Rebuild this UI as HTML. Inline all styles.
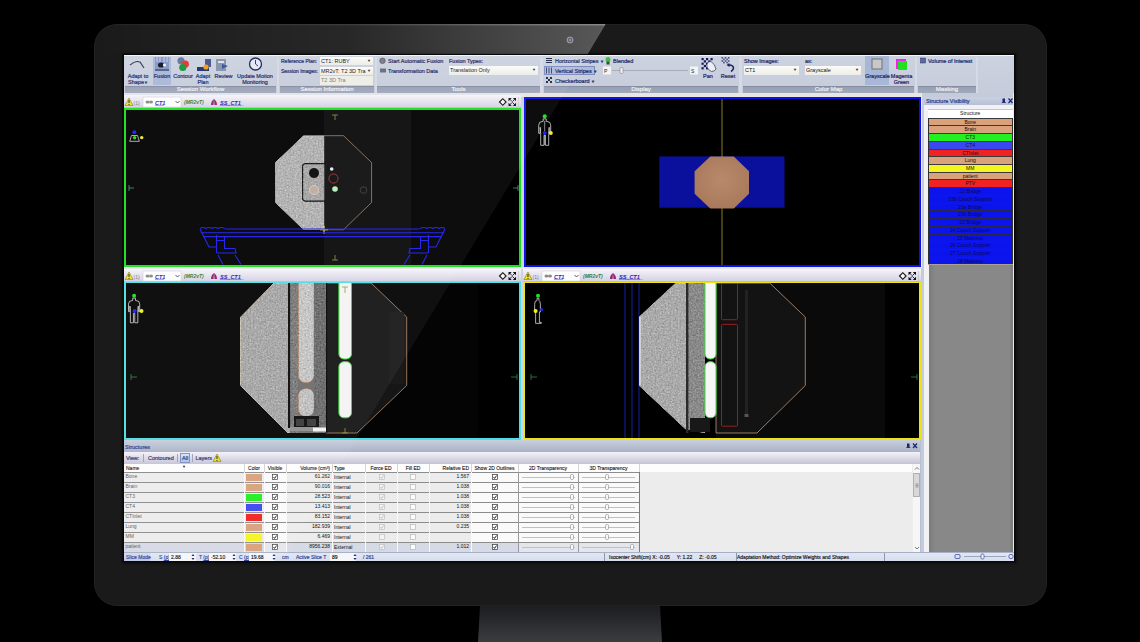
<!DOCTYPE html>
<html><head><meta charset="utf-8">
<style>
html,body{margin:0;padding:0;}
body{width:1140px;height:642px;background:#000;position:relative;overflow:hidden;font-family:"Liberation Sans",sans-serif;}
.a{position:absolute;}
#bezel{left:94px;top:24px;width:952.5px;height:582px;border-radius:23px;background:#1a1a1a;box-shadow:inset 0 0 0 0.8px rgba(255,255,255,0.05);}
#stand{left:478px;top:606px;width:184px;height:36px;background:linear-gradient(#1c1d1f,#25262a 30%,#3c3d41);clip-path:polygon(2px 0,182px 0,184px 100%,0 100%);}
#screen{left:124px;top:55px;width:890px;height:506px;background:#cdd3df;box-shadow:0 0 0 1.5px #080808, 0 0 2px 2.5px #121212;}
.rib{background:linear-gradient(#cdd2e0,#c6ccdb);}
.lbl{background:linear-gradient(#7c8498,#98a0b4 20%,#a0a8bb);color:#f4f6fa;font-size:6px;text-align:center;line-height:7.5px;-webkit-text-stroke:0.15px #f4f6fa;}
.t{font-size:5.5px;line-height:6px;color:#1a2566;white-space:nowrap;-webkit-text-stroke:0.2px currentColor;}
.cb{background:linear-gradient(#fbfbf9,#ecece8);font-size:5.5px;line-height:8px;color:#111;padding-left:1px;box-sizing:border-box;white-space:nowrap;overflow:hidden;}
.dd{position:absolute;right:2px;top:0;font-size:4px;color:#222;}
.sr{font-size:5px;line-height:7px;text-align:center;box-sizing:border-box;white-space:nowrap;overflow:hidden;}
.th{font-size:5px;line-height:8px;color:#111;white-space:nowrap;box-sizing:border-box;-webkit-text-stroke:0.1px #111;}
.td{font-size:5px;line-height:7px;white-space:nowrap;}
.st{font-size:5px;line-height:8px;white-space:nowrap;-webkit-text-stroke:0.15px currentColor;}
.vp{background:#000;}
.hdr{background:linear-gradient(#f6f4fa,#d6d2e4);}
</style></head><body>
<svg width="0" height="0" style="position:absolute"><defs>
<filter id="grain" x="0" y="0" width="100%" height="100%" color-interpolation-filters="sRGB">
<feTurbulence type="fractalNoise" baseFrequency="0.6" numOctaves="2" seed="3" result="n"/>
<feColorMatrix in="n" type="matrix" values="0.33 0.33 0.33 0 0  0.33 0.33 0.33 0 0  0.33 0.33 0.33 0 0  0 0 0 0 1" result="g"/>
<feComposite in="SourceGraphic" in2="g" operator="arithmetic" k1="0" k2="1" k3="0.55" k4="-0.275" result="c"/>
<feComposite in="c" in2="SourceGraphic" operator="in"/>
</filter>
</defs></svg>
<div id="bezel" class="a"></div>
<div id="stand" class="a"></div>
<svg class="a" style="left:560px;top:30px" width="20" height="20"><circle cx="10" cy="10" r="3" fill="#3a3a44" stroke="#9a9aa0" stroke-width="0.8"/><circle cx="10" cy="10" r="1" fill="#6a6ad0"/></svg>

<div id="screen" class="a"></div>

<!-- ribbon -->
<div class="a rib" style="left:124px;top:55px;width:890px;height:38px;border-top:1px solid #f4f6fa;box-sizing:border-box;"></div>
<!-- ribbon content -->
<div class="a" style="left:153px;top:57px;width:18px;height:28px;background:#a9b7d7;"></div>
<div class="a" style="left:865px;top:56px;width:24px;height:29px;background:#a9b7d7;"></div>
<div class="a" style="left:375px;top:57px;width:2px;height:36px;background:#d6dae4;"></div>
<div class="a" style="left:277px;top:57px;width:2px;height:36px;background:#d6dae4;"></div>
<div class="a" style="left:540px;top:57px;width:3px;height:36px;background:#d6dae4;"></div>
<div class="a" style="left:739px;top:57px;width:3px;height:36px;background:#d6dae4;"></div>
<div class="a" style="left:915px;top:57px;width:2px;height:36px;background:#d6dae4;"></div>
<div class="a" style="left:976px;top:57px;width:2px;height:36px;background:#d6dae4;"></div>
<svg class="a" style="left:124px;top:55px;z-index:1" width="890" height="32">
 <!-- adapt to shape curve -->
 <path d="M6 10 Q12 5 16 7 L20 13" stroke="#3a4058" stroke-width="1.2" fill="none"/>
 <path d="M6 9 Q12 4 16 6" stroke="#f0f2f8" stroke-width="0.6" fill="none"/>
 <!-- fusion icon -->
 <rect x="31" y="2" width="14" height="14" fill="#8c9cc8"/>
 <path d="M33 2v5M36 2v5M40 2v5M43 2v5" stroke="#c8d4ee" stroke-width="1"/>
 <ellipse cx="37" cy="10" rx="3" ry="2.6" fill="#182030"/>
 <ellipse cx="40.5" cy="10" rx="1.6" ry="1.6" fill="#f0f4fa"/>
 <rect x="31" y="14" width="14" height="2" fill="#5a6890"/>
 <!-- contour -->
 <circle cx="57" cy="5.8" r="3.6" fill="#6a7aa0"/>
 <circle cx="61.3" cy="9.2" r="3.6" fill="#e83a3a"/>
 <circle cx="58.8" cy="12.5" r="3.6" fill="#1e9a40"/>
 <!-- adapt plan -->
 <rect x="73" y="12" width="12" height="4" fill="#2a3a70"/>
 <rect x="81" y="4" width="6" height="8" fill="#4a5a90"/>
 <circle cx="82" cy="12" r="2.6" fill="#f0a020"/>
 <!-- review -->
 <rect x="92" y="4" width="10" height="12" fill="#8c96ae"/>
 <rect x="94" y="6" width="6" height="2" fill="#dfe3ee"/>
 <path d="M98 9 L104 11 L98 14 Z" fill="#3a5aa0"/>
 <!-- clock -->
 <circle cx="131.5" cy="9" r="6" fill="#e6e9f2" stroke="#22305e" stroke-width="1.3"/>
 <path d="M131.5 5 V9 L134 11" stroke="#22305e" stroke-width="0.9" fill="none"/>
 <!-- start automatic fusion icon -->
 <circle cx="258.5" cy="5.8" r="2.8" fill="#7a8090" stroke="#505868" stroke-width="0.6"/>
 <rect x="256" y="13.5" width="6" height="4" fill="#6c7284"/>
 <!-- display icons -->
 <path d="M422 3.5h6M422 5.5h6M422 7.5h6" stroke="#2a3050" stroke-width="1"/>
 <path d="M422.5 12.5v6M425 12.5v6M427.5 12.5v6" stroke="#2a3050" stroke-width="0.8"/>
 <g fill="#2a3050"><rect x="422" y="22" width="2" height="2"/><rect x="426" y="22" width="2" height="2"/><rect x="424" y="24" width="2" height="2"/><rect x="422" y="26" width="2" height="2"/><rect x="426" y="26" width="2" height="2"/></g>
 <circle cx="484" cy="4.5" r="2.5" fill="#40c040"/>
 <rect x="482.5" y="6.5" width="3" height="3" fill="#305030"/>
 <!-- slider -->
 <rect x="479" y="11.5" width="8" height="8" fill="#f4f4f4"/>
 <text x="480" y="18" font-size="5" fill="#222" font-family="Liberation Sans">P</text>
 <path d="M488 15.5 H564" stroke="#a0a4ae" stroke-width="0.8"/>
 <rect x="496" y="12.5" width="3" height="6" rx="1" fill="#f0f0f0" stroke="#707480" stroke-width="0.5"/>
 <rect x="566" y="11.5" width="8" height="8" fill="#f4f4f4"/>
 <text x="567" y="18" font-size="5" fill="#222" font-family="Liberation Sans">S</text>
 <!-- pan -->
 <g fill="#141c58">
  <rect x="577.5" y="3" width="2.2" height="2.2"/><rect x="582" y="3" width="2.2" height="2.2"/><rect x="586.5" y="3" width="2.2" height="2.2"/>
  <rect x="579.8" y="5.3" width="2.2" height="2.2"/><rect x="584.3" y="5.3" width="2.2" height="2.2"/>
  <rect x="577.5" y="7.6" width="2.2" height="2.2"/><rect x="582" y="7.6" width="2.2" height="2.2"/>
  <rect x="579.8" y="9.9" width="2.2" height="2.2"/><rect x="577.5" y="12.2" width="2.2" height="2.2"/><rect x="582" y="12.2" width="2.2" height="2.2"/>
 </g>
 <path d="M583 9 Q584 6 587 6.5 Q591 9 592 14 Q591 16.5 587.5 16.5 Q584 15 583 12 Z" fill="#eceef4" stroke="#3a4260" stroke-width="0.8"/>
 <!-- reset -->
 <g fill="#4a5488"><rect x="597.5" y="2" width="1.6" height="1.6"/><rect x="600.7" y="2" width="1.6" height="1.6"/><rect x="603.9" y="2" width="1.6" height="1.6"/><rect x="599.1" y="3.6" width="1.6" height="1.6"/><rect x="602.3" y="3.6" width="1.6" height="1.6"/><rect x="597.5" y="5.2" width="1.6" height="1.6"/><rect x="600.7" y="5.2" width="1.6" height="1.6"/><rect x="603.9" y="5.2" width="1.6" height="1.6"/><rect x="599.1" y="6.8" width="1.6" height="1.6"/><rect x="602.3" y="6.8" width="1.6" height="1.6"/></g>
 <path d="M604 10 Q609 9.5 609.5 13 Q609.5 15 607 16.5" stroke="#1a2460" stroke-width="1.6" fill="none"/>
 <path d="M602.5 10 L605.5 8 L605.5 12 Z" fill="#1a2460"/>
 <!-- grayscale icon -->
 <rect x="748" y="4" width="10" height="10" fill="#c8c8c8" stroke="#707070" stroke-width="1"/>
 <!-- magenta green -->
 <rect x="772" y="4" width="10" height="10" fill="#f020f0"/>
 <rect x="774" y="6" width="9" height="9" fill="#20e020"/>
 <!-- VOI icon -->
 <rect x="796.5" y="3" width="5" height="5" fill="#5868a0" stroke="#2a3460" stroke-width="0.5"/>
</svg>
<div class="a t" style="left:126px;top:73px;width:24px;text-align:center;">Adapt to<br>Shape<span style="font-size:4px">&#9660;</span></div>
<div class="a t" style="left:152px;top:73px;width:20px;text-align:center;">Fusion</div>
<div class="a t" style="left:172px;top:73px;width:22px;text-align:center;">Contour</div>
<div class="a t" style="left:193px;top:73px;width:20px;text-align:center;">Adapt<br>Plan</div>
<div class="a t" style="left:214px;top:73px;width:19px;text-align:center;">Review</div>
<div class="a t" style="left:234px;top:73px;width:42px;text-align:center;">Update Motion<br>Monitoring</div>
<div class="a t" style="left:281px;top:58px;font-size:5px;">Reference Plan:</div>
<div class="a t" style="left:281px;top:68px;font-size:5px;">Session Images:</div>
<div class="a cb" style="left:320px;top:57px;width:53px;height:8px;">CT1: RUBY<span class="dd">&#9660;</span></div>
<div class="a cb" style="left:320px;top:67px;width:53px;height:8px;">MR2vT: T2 3D Tra<span class="dd">&#9660;</span></div>
<div class="a cb" style="left:320px;top:76px;width:53px;height:9px;background:#eeeee8;color:#777;">T2 3D Tra</div>
<div class="a t" style="left:388px;top:58px;">Start Automatic Fusion</div>
<div class="a t" style="left:388px;top:68px;">Transformation Data</div>
<div class="a t" style="left:449px;top:58px;">Fusion Types:</div>
<div class="a cb" style="left:449px;top:66px;width:89px;height:9px;">Translation Only<span class="dd">&#9660;</span></div>
<div class="a" style="left:544px;top:66px;width:51px;height:9px;background:#aebcdc;border:0.6px solid #7c8cc0;box-sizing:border-box;"></div>
<div class="a t" style="left:555px;top:58px;">Horizontal Stripes <span style="font-size:4px">&#9660;</span></div>
<div class="a t" style="left:555px;top:68px;">Vertical Stripes <span style="font-size:4px">&#9660;</span></div>
<div class="a t" style="left:555px;top:78px;">Checkerboard <span style="font-size:4px">&#9660;</span></div>
<div class="a t" style="left:613px;top:58px;">Blended</div>
<div class="a t" style="left:700px;top:73px;width:16px;text-align:center;">Pan</div>
<div class="a t" style="left:719px;top:73px;width:18px;text-align:center;">Reset</div>
<div class="a t" style="left:744px;top:58px;">Show Images:</div>
<div class="a cb" style="left:744px;top:66px;width:55px;height:9px;">CT1<span class="dd">&#9660;</span></div>
<div class="a t" style="left:805px;top:58px;">as:</div>
<div class="a cb" style="left:805px;top:66px;width:56px;height:9px;">Grayscale<span class="dd">&#9660;</span></div>
<div class="a t" style="left:865px;top:73px;width:24px;text-align:center;">Grayscale</div>
<div class="a t" style="left:889px;top:73px;width:25px;text-align:center;">Magenta<br>Green</div>
<div class="a t" style="left:928px;top:58px;">Volume of Interest</div>
<div class="a lbl" style="left:125px;top:86px;width:151px;height:7px;">Session Workflow</div>
<div class="a lbl" style="left:280px;top:86px;width:94px;height:7px;">Session Information</div>
<div class="a lbl" style="left:377px;top:86px;width:163px;height:7px;">Tools</div>
<div class="a lbl" style="left:544px;top:86px;width:194px;height:7px;">Display</div>
<div class="a lbl" style="left:743px;top:86px;width:171px;height:7px;">Color Map</div>
<div class="a lbl" style="left:918px;top:86px;width:58px;height:7px;">Masking</div>

<!-- TL viewport -->
<div class="a" style="left:124px;top:93px;width:397px;height:2px;background:#e2e4ea;"></div>
<div class="a hdr" style="left:124px;top:95px;width:397px;height:12px;"></div>
<div class="a" style="left:124px;top:107px;width:397px;height:1px;background:#d8a8e8;"></div>
<svg class="a" style="left:124px;top:95px" width="397" height="13">
 <path d="M5 3 L9 10.5 L1 10.5 Z" fill="#f0e020" stroke="#807820" stroke-width="0.6"/>
 <rect x="4.5" y="5" width="1" height="3" fill="#222"/><rect x="4.5" y="9" width="1" height="1" fill="#222"/>
 <text x="9.5" y="9.5" font-size="5" fill="#707a98" font-family="Liberation Sans">(1)</text>
 <rect x="19" y="2" width="38" height="10" fill="#fdfdfd" stroke="#c8ccd8" stroke-width="0.5"/>
 <ellipse cx="23.5" cy="7" rx="2" ry="1.5" fill="#8a8a8a"/><ellipse cx="27" cy="7" rx="2" ry="1.5" fill="#8a8a8a"/>
 <text x="31" y="9.5" font-size="5.5" font-weight="bold" font-style="italic" fill="#2020c0" font-family="Liberation Sans">CT1</text>
 <path d="M31 10.3 H40" stroke="#2020c0" stroke-width="0.5"/>
 <path d="M51.5 6 L53.5 8 L55.5 6" stroke="#333" stroke-width="0.8" fill="none"/>
 <text x="60" y="9.3" font-size="5" font-style="italic" font-weight="bold" fill="#2a7e36" font-family="Liberation Sans">(MR2vT)</text>
 <path d="M90 4 Q87 6 87 10 L89.5 10 Z M90 4 Q93 6 93 10 L90.5 10 Z" fill="#902070"/>
 <text x="96" y="9.5" font-size="5.5" font-weight="bold" font-style="italic" fill="#2020c0" font-family="Liberation Sans">SS_CT1_</text>
 <path d="M96 10.3 H117" stroke="#2020c0" stroke-width="0.5"/>
</svg>
<svg class="a" style="left:495px;top:95px" width="26" height="13">
 <path d="M4.5 7 L7.8 3.7 L11.1 7 L7.8 10.3 Z" fill="#f8f8f0" stroke="#111" stroke-width="1.1"/>
 <path d="M13.5 3 h3.2 l-3.2 3.2 z M21 3 v3.2 l-3.2 -3.2 z M13.5 11 v-3.2 l3.2 3.2 z M21 11 h-3.2 l3.2 -3.2 z" fill="#111"/><path d="M14.5 4 l2.5 2.5 M20 4 l-2.5 2.5 M14.5 10 l2.5 -2.5 M20 10 l-2.5 -2.5" stroke="#111" stroke-width="0.9"/>
 <path d="M23.5 2 V12" stroke="#c0c0cc" stroke-width="0.6"/>
</svg>

<div class="a vp" style="left:124px;top:108px;width:393px;height:155px;border:2px solid #18e018;"></div>
<svg class="a" style="left:126px;top:110px" width="393" height="155" viewBox="126 110 393 155">
<rect x="126" y="110" width="393" height="155" fill="#000"/>
<rect x="324" y="110" width="87" height="155" fill="#0a0a0a"/>
<polygon filter="url(#grain)" points="303.5,135.7 324.3,135.7 324.3,229.7 303.5,229.7 275.4,202.5 275.4,162.5" fill="#b0b0b0" stroke="#e8e0d8" stroke-width="0.8"/>
<polygon points="324.3,135.7 343.5,135.7 371.6,162.5 371.6,202.5 343.5,229.7 324.3,229.7" fill="#0f0f0f"/><path d="M324.3 135.7 H343.5 L371.6 162.5 V202.5 L343.5 229.7 H324.3" fill="none" stroke="#b89078" stroke-width="0.7"/>
<rect filter="url(#grain)" x="302.5" y="163.7" width="24" height="37.5" rx="3" fill="#a4a4a4" stroke="#111" stroke-width="1.3"/>
<rect x="324.3" y="162" width="4" height="41" fill="#0f0f0f"/>
<circle cx="314" cy="173" r="5.5" fill="#080808" stroke="#ccc0b8" stroke-width="0.8"/>
<circle cx="314" cy="190" r="4.5" fill="#c0aaa0" stroke="#e0d0c8" stroke-width="0.8"/>
<circle cx="331.7" cy="169" r="1.8" fill="#e8e8ff"/>
<circle cx="333.5" cy="178.5" r="4.6" fill="none" stroke="#c02828" stroke-width="0.9"/>
<circle cx="335" cy="189" r="2.8" fill="#b8f0b8"/>
<circle cx="363.5" cy="190" r="3.2" fill="none" stroke="#303030" stroke-width="1.2"/>
<path d="M320 229.7 h8 M324 225.7 v8" stroke="#f0e040" stroke-width="1.1"/>
<g stroke="#1c1cf0" stroke-width="1.1" fill="none"><path d="M225.5 229 H419.5 M200.7 232.8 H444.3 M203 236.6 H442 M200 228.5 q3 -2 6 0 q3 -2 6 0 q3 -2 6 0 q3 -2 7 0 M200 229 L209 247 H216.5 M216.5 235 V253 M216.5 240.5 H224.5 M224.5 236 V248.5 H235 L236 253 H217 M218 255 L223 264.5 M235 255 L241 264.5"/><path d="M445 228.5 q-3 -2 -6 0 q-3 -2 -6 0 q-3 -2 -6 0 q-3 -2 -7 0 M445 229 L436 247 H428.5 M428.5 235 V253 M428.5 240.5 H420.5 M420.5 236 V248.5 H410 L409 253 H428 M427 255 L422 264.5 M410 255 L404 264.5"/></g>
<path d="M332 115 h6 M335 115 v5" stroke="#9a9040" stroke-width="0.8"/>
<path d="M332 260 h6 M335 260 v-5" stroke="#9a9040" stroke-width="0.8"/>
<path d="M129 185 v6 M129 188 h5" stroke="#4a9a80" stroke-width="0.8"/>
<path d="M518 185 v6 M518 188 h-5" stroke="#4a9a80" stroke-width="0.8"/>
<circle cx="134.3" cy="132.2" r="1.9" fill="#2020f0"/>
<path d="M131.5 135.5 h6 l1.8 5.8 h-9.6 z" fill="none" stroke="#d0d0d8" stroke-width="0.8"/>
<circle cx="134.6" cy="137.8" r="1.7" fill="#20e020"/>
<circle cx="141.7" cy="137.6" r="1.7" fill="#f0f020"/>
</svg>

<!-- TR viewport -->
<div class="a" style="left:521px;top:93px;width:402px;height:4px;background:#e8e6e0;"></div>
<div class="a" style="left:523.5px;top:97px;width:393.5px;height:166px;border:2px solid #0a10f0;background:#000;"></div>
<svg class="a" style="left:526px;top:99px" width="391" height="166" viewBox="526 99 391 166">
<rect x="526" y="99" width="391" height="166" fill="#000"/>
<rect x="659.3" y="156.4" width="125.2" height="51.3" fill="#0a109c"/>
<line x1="722" y1="99" x2="722" y2="265" stroke="#8c7c22" stroke-width="1"/>
<defs><radialGradient id="tan" cx="0.5" cy="0.45" r="0.6"><stop offset="0" stop-color="#b88a6a"/><stop offset="1" stop-color="#a8785a"/></radialGradient></defs>
<polygon points="710.3,156.4 733.8,156.4 749,171.3 749,193.7 733.8,208.5 710.3,208.5 694.6,193.7 694.6,171.3" fill="url(#tan)"/>
<polygon points="543.20,118.80 543.20,121.30 539.70,122.30 538.70,125.30 538.70,133.30 540.20,133.30 540.20,127.30 540.70,133.30 540.70,145.30 544.00,145.30 544.00,135.30 545.40,135.30 545.40,145.30 548.70,145.30 548.70,133.30 549.20,127.30 549.20,133.30 550.70,133.30 550.70,125.30 549.70,122.30 546.20,121.30 546.20,118.80" fill="none" stroke="#d8d8d8" stroke-width="0.8"/>
<circle cx="544.7" cy="116.3" r="2" fill="#20e020"/>
<line x1="544.7" y1="121" x2="544.7" y2="145" stroke="#c8c8c8" stroke-width="0.7"/>
<circle cx="544.7" cy="133" r="2" fill="#2020f0"/>
<circle cx="550.8" cy="133" r="2" fill="#f0f020"/>
</svg>

<!-- BL -->
<div class="a" style="left:124px;top:267px;width:797px;height:2px;background:#e6e4ec;"></div>
<div class="a hdr" style="left:124px;top:269px;width:397px;height:12px;"></div>
<div class="a" style="left:124px;top:281px;width:397px;height:1px;background:#d8a8e8;"></div>
<svg class="a" style="left:124px;top:269px" width="397" height="13">
 <path d="M5 3 L9 10.5 L1 10.5 Z" fill="#f0e020" stroke="#807820" stroke-width="0.6"/>
 <rect x="4.5" y="5" width="1" height="3" fill="#222"/><rect x="4.5" y="9" width="1" height="1" fill="#222"/>
 <text x="9.5" y="9.5" font-size="5" fill="#707a98" font-family="Liberation Sans">(1)</text>
 <rect x="19" y="2" width="38" height="10" fill="#fdfdfd" stroke="#c8ccd8" stroke-width="0.5"/>
 <ellipse cx="23.5" cy="7" rx="2" ry="1.5" fill="#8a8a8a"/><ellipse cx="27" cy="7" rx="2" ry="1.5" fill="#8a8a8a"/>
 <text x="31" y="9.5" font-size="5.5" font-weight="bold" font-style="italic" fill="#2020c0" font-family="Liberation Sans">CT1</text>
 <path d="M31 10.3 H40" stroke="#2020c0" stroke-width="0.5"/>
 <path d="M51.5 6 L53.5 8 L55.5 6" stroke="#333" stroke-width="0.8" fill="none"/>
 <text x="60" y="9.3" font-size="5" font-style="italic" font-weight="bold" fill="#2a7e36" font-family="Liberation Sans">(MR2vT)</text>
 <path d="M90 4 Q87 6 87 10 L89.5 10 Z M90 4 Q93 6 93 10 L90.5 10 Z" fill="#902070"/>
 <text x="96" y="9.5" font-size="5.5" font-weight="bold" font-style="italic" fill="#2020c0" font-family="Liberation Sans">SS_CT1_</text>
 <path d="M96 10.3 H117" stroke="#2020c0" stroke-width="0.5"/>
</svg>
<svg class="a" style="left:495px;top:269px" width="26" height="13">
 <path d="M4.5 7 L7.8 3.7 L11.1 7 L7.8 10.3 Z" fill="#f8f8f0" stroke="#111" stroke-width="1.1"/>
 <path d="M13.5 3 h3.2 l-3.2 3.2 z M21 3 v3.2 l-3.2 -3.2 z M13.5 11 v-3.2 l3.2 3.2 z M21 11 h-3.2 l3.2 -3.2 z" fill="#111"/><path d="M14.5 4 l2.5 2.5 M20 4 l-2.5 2.5 M14.5 10 l2.5 -2.5 M20 10 l-2.5 -2.5" stroke="#111" stroke-width="0.9"/>
 <path d="M23.5 2 V12" stroke="#c0c0cc" stroke-width="0.6"/>
</svg>

<div class="a vp" style="left:124px;top:281.5px;width:393px;height:154.5px;border:2px solid #4cdfe4;"></div>
<svg class="a" style="left:126px;top:283px" width="393" height="155" viewBox="126 283 393 155">
<rect x="126" y="283" width="393" height="155" fill="#040404"/>
<rect x="478" y="283" width="41" height="155" fill="#000"/>
<polygon filter="url(#grain)" points="274,283 326,283 326,433 288,433 240.5,385.5 240.5,317" fill="#a6a6a6" stroke="#e0d0c0" stroke-width="0.9"/>
<polygon points="326,283 371,283 406.7,317 406.7,385.5 357,433 326,433" fill="#161616" stroke="#b88c6c" stroke-width="0.8"/>
<rect x="389" y="312" width="15" height="72" fill="#1a1a1a"/>
<defs><clipPath id="blc"><polygon points="274,283 406.7,283 406.7,433 288,433 240.5,385.5 240.5,317"/></clipPath></defs><g clip-path="url(#blc)">
<rect x="288" y="283" width="2.2" height="145" fill="#0a0a0a"/>
<rect filter="url(#grain)" x="290.2" y="283" width="7.8" height="150" fill="#7a7a7a"/>
<rect x="298" y="283" width="16" height="150" fill="#6e6e6e"/>
<rect filter="url(#grain)" x="314" y="283" width="12" height="150" fill="#6a6a6a"/>
<rect x="326" y="283" width="1.2" height="150" fill="#050505"/></g>
<rect filter="url(#grain)" x="298.3" y="275" width="15.7" height="107.7" rx="7" fill="#c4c4c4" stroke="#c09070" stroke-width="0.9"/>
<rect filter="url(#grain)" x="298.3" y="388.4" width="15.7" height="28" rx="7" fill="#c0c0c0" stroke="#c09070" stroke-width="0.9"/>
<rect x="294" y="416" width="25" height="11" fill="#0c0c0c"/>
<rect x="296" y="419" width="8" height="7" fill="#3a3a3a"/><rect x="307" y="419" width="9" height="7" fill="#3a3a3a"/>
<rect x="290" y="427" width="24" height="4" fill="#909090"/>
<rect x="313" y="427.5" width="13" height="4" fill="#f2f2f2"/>
<rect x="338.9" y="275" width="12.6" height="84" rx="5" fill="#f4f4f4" stroke="#30e030" stroke-width="1"/>
<rect x="338.9" y="361.7" width="12.6" height="56.1" rx="5" fill="#f4f4f4" stroke="#30e030" stroke-width="1"/>
<path d="M342 287 h6 M345 287 v6" stroke="#a09040" stroke-width="0.8"/>
<path d="M342 433 h6 M345 433 v-5" stroke="#a09040" stroke-width="0.8"/>
<path d="M131 374 v6 M131 377 h6" stroke="#2a8a4a" stroke-width="0.8"/>
<path d="M517 374 v6 M517 377 h-6" stroke="#2a8a4a" stroke-width="0.8"/>
<polygon points="132.70,298.12 132.70,300.45 129.45,301.38 128.52,304.17 128.52,311.61 129.91,311.61 129.91,306.03 130.38,311.61 130.38,322.77 133.45,322.77 133.45,313.47 134.75,313.47 134.75,322.77 137.82,322.77 137.82,311.61 138.28,306.03 138.28,311.61 139.68,311.61 139.68,304.17 138.75,301.38 135.50,300.45 135.50,298.12" fill="none" stroke="#d8d8d8" stroke-width="0.8"/>
<circle cx="134.1" cy="295.8" r="2" fill="#20e020"/>
<circle cx="134.5" cy="311" r="2" fill="#2020f0"/>
<circle cx="141.5" cy="311" r="2" fill="#f0f020"/>
</svg>

<!-- BR -->
<div class="a hdr" style="left:523px;top:269px;width:398px;height:12px;"></div>
<div class="a" style="left:523px;top:281px;width:398px;height:1px;background:#d8a8e8;"></div>
<svg class="a" style="left:523px;top:269px" width="398" height="13">
 <path d="M5 3 L9 10.5 L1 10.5 Z" fill="#f0e020" stroke="#807820" stroke-width="0.6"/>
 <rect x="4.5" y="5" width="1" height="3" fill="#222"/><rect x="4.5" y="9" width="1" height="1" fill="#222"/>
 <text x="9.5" y="9.5" font-size="5" fill="#707a98" font-family="Liberation Sans">(1)</text>
 <rect x="19" y="2" width="38" height="10" fill="#fdfdfd" stroke="#c8ccd8" stroke-width="0.5"/>
 <ellipse cx="23.5" cy="7" rx="2" ry="1.5" fill="#8a8a8a"/><ellipse cx="27" cy="7" rx="2" ry="1.5" fill="#8a8a8a"/>
 <text x="31" y="9.5" font-size="5.5" font-weight="bold" font-style="italic" fill="#2020c0" font-family="Liberation Sans">CT1</text>
 <path d="M31 10.3 H40" stroke="#2020c0" stroke-width="0.5"/>
 <path d="M51.5 6 L53.5 8 L55.5 6" stroke="#333" stroke-width="0.8" fill="none"/>
 <text x="60" y="9.3" font-size="5" font-style="italic" font-weight="bold" fill="#2a7e36" font-family="Liberation Sans">(MR2vT)</text>
 <path d="M90 4 Q87 6 87 10 L89.5 10 Z M90 4 Q93 6 93 10 L90.5 10 Z" fill="#902070"/>
 <text x="96" y="9.5" font-size="5.5" font-weight="bold" font-style="italic" fill="#2020c0" font-family="Liberation Sans">SS_CT1_</text>
 <path d="M96 10.3 H117" stroke="#2020c0" stroke-width="0.5"/>
</svg>
<svg class="a" style="left:895px;top:269px" width="26" height="13">
 <path d="M4.5 7 L7.8 3.7 L11.1 7 L7.8 10.3 Z" fill="#f8f8f0" stroke="#111" stroke-width="1.1"/>
 <path d="M13.5 3 h3.2 l-3.2 3.2 z M21 3 v3.2 l-3.2 -3.2 z M13.5 11 v-3.2 l3.2 3.2 z M21 11 h-3.2 l3.2 -3.2 z" fill="#111"/><path d="M14.5 4 l2.5 2.5 M20 4 l-2.5 2.5 M14.5 10 l2.5 -2.5 M20 10 l-2.5 -2.5" stroke="#111" stroke-width="0.9"/>
 <path d="M23.5 2 V12" stroke="#c0c0cc" stroke-width="0.6"/>
</svg>

<div class="a vp" style="left:523.5px;top:281.5px;width:393.5px;height:154.5px;border:2px solid #ece414;"></div>
<svg class="a" style="left:525px;top:283px" width="394" height="155" viewBox="525 283 394 155">
<rect x="525" y="283" width="394" height="155" fill="#000"/>
<rect x="716" y="283" width="169" height="155" fill="#0a0a0a"/>
<path d="M625 283 V438 M632 283 V438 M639 283 V438" stroke="#1a24c0" stroke-width="0.9"/>
<polygon filter="url(#grain)" points="675.6,283 705,283 705,433 685.4,429 639,385.5 639,317" fill="#aaaaaa" stroke="#d8d0c8" stroke-width="0.8"/>
<rect x="639" y="317" width="2" height="68" fill="#d0d0d0"/>
<polygon points="716,283 769.7,283 805.3,317 805.3,385.5 757,433 716,433" fill="#131313" stroke="#c09878" stroke-width="0.8"/>
<rect x="686" y="283" width="2.5" height="150" fill="#2a2a2a"/>
<rect filter="url(#grain)" x="688.5" y="283" width="16.5" height="147" fill="#8a8a8a"/>
<rect x="705" y="275" width="11" height="84" rx="5" fill="#f6f6f6" stroke="#30e030" stroke-width="1"/>
<rect x="705" y="361.7" width="11" height="56.1" rx="5" fill="#f6f6f6" stroke="#30e030" stroke-width="1"/>
<rect x="690" y="418" width="20" height="14" fill="#181818"/>
<rect x="721.5" y="278" width="16" height="41.7" rx="1" fill="none" stroke="#b02424" stroke-width="0.8"/>
<rect x="721.5" y="324.4" width="16" height="101.8" rx="1" fill="none" stroke="#b02424" stroke-width="0.8"/>
<rect x="745" y="290" width="3" height="125" fill="#222"/><rect x="744.5" y="414" width="4" height="3" fill="#555"/>
<path d="M531 374 v6 M531 377 h6" stroke="#2a8a4a" stroke-width="0.8"/>
<path d="M917 374 v6 M917 377 h-6" stroke="#2a8a4a" stroke-width="0.8"/>
<polygon points="537.05,298.18 537.05,300.55 535.15,301.50 534.67,304.35 534.67,311.95 535.62,311.95 535.62,323.35 541.33,323.35 541.33,322.40 539.42,322.40 539.42,311.95 540.38,311.95 540.38,304.35 539.90,301.50 538.95,300.55 538.95,298.18" fill="none" stroke="#d8d8d8" stroke-width="0.8"/>
<circle cx="538.0" cy="295.8" r="2" fill="#20e020"/>
<circle cx="535.6" cy="311" r="2" fill="#f0f020"/>
<circle cx="541.6" cy="309.5" r="1.6" fill="#2020f0"/>
</svg>


<!-- structure visibility -->
<div class="a" style="left:921px;top:93px;width:93px;height:459px;background:#c4ccdc;"></div>
<div class="a" style="left:921px;top:93px;width:1px;height:175px;background:#f0f0d0;"></div>
<div class="a" style="left:924px;top:96.5px;width:89px;height:8px;background:linear-gradient(#c8d0e2,#b8c0d6);"></div>
<div class="a t" style="left:926px;top:97.5px;color:#2a3a8a;">Structure Visibility</div>
<svg class="a" style="left:1000px;top:97px" width="14" height="8"><rect x="2.5" y="1.5" width="2.5" height="4" fill="#1a2470"/><rect x="1.8" y="5" width="4" height="0.8" fill="#1a2470"/><path d="M8.5 1.5 l4 4.5 M12.5 1.5 l-4 4.5" stroke="#1a2470" stroke-width="1.2"/></svg>
<div class="a" style="left:924px;top:104.5px;width:89px;height:447.5px;background:#f2f2f4;"></div>
<div class="a" style="left:928px;top:108.5px;width:85px;height:1.5px;background:#c8c8cc;"></div>
<div class="a" style="left:929px;top:265px;width:84px;height:287px;background:linear-gradient(90deg,#7c7c7c,#888 6px,#888 80px,#7a7a7a);"></div>
<div class="a" style="left:1013px;top:93px;width:1px;height:459px;background:#e8ecf4;"></div>
<div class="a sr" style="left:928px;top:110.00px;width:84.5px;height:7.72px;background:#ffffff;color:#111;">Structure</div>
<div class="a sr" style="left:928px;top:117.72px;width:84.5px;height:7.72px;background:#d9a27c;border-top:1px solid #3a3a3a;color:#111;">Bone</div>
<div class="a sr" style="left:928px;top:125.44px;width:84.5px;height:7.72px;background:#d9a27c;border-top:1px solid #3a3a3a;color:#111;">Brain</div>
<div class="a sr" style="left:928px;top:133.16px;width:84.5px;height:7.72px;background:#22f022;border-top:1px solid #3a3a3a;color:#111;">CT3</div>
<div class="a sr" style="left:928px;top:140.88px;width:84.5px;height:7.72px;background:#3a48f0;border-top:1px solid #3a3a3a;color:#111;">CT4</div>
<div class="a sr" style="left:928px;top:148.60px;width:84.5px;height:7.72px;background:#f02222;border-top:1px solid #3a3a3a;color:#111;">CTInlet</div>
<div class="a sr" style="left:928px;top:156.32px;width:84.5px;height:7.72px;background:#d9a27c;border-top:1px solid #3a3a3a;color:#111;">Lung</div>
<div class="a sr" style="left:928px;top:164.04px;width:84.5px;height:7.72px;background:#f4f422;border-top:1px solid #3a3a3a;color:#111;">MM</div>
<div class="a sr" style="left:928px;top:171.76px;width:84.5px;height:7.72px;background:#d9a27c;border-top:1px solid #3a3a3a;color:#111;">patient</div>
<div class="a sr" style="left:928px;top:179.48px;width:84.5px;height:7.72px;background:#f02222;border-top:1px solid #3a3a3a;color:#111;">PTV</div>
<div class="a sr" style="left:928px;top:187.20px;width:84.5px;height:7.72px;background:#0c14ee;border-top:1px solid #2a2a48;color:#0a0a50;">23 Bridge</div>
<div class="a sr" style="left:928px;top:194.92px;width:84.5px;height:7.72px;background:#0c14ee;border-top:1px solid #2a2a48;color:#0a0a50;">23b Couch Support</div>
<div class="a sr" style="left:928px;top:202.64px;width:84.5px;height:7.72px;background:#0c14ee;border-top:1px solid #2a2a48;color:#0a0a50;">23a Bridge</div>
<div class="a sr" style="left:928px;top:210.36px;width:84.5px;height:7.72px;background:#0c14ee;border-top:1px solid #2a2a48;color:#0a0a50;">23b Bridge</div>
<div class="a sr" style="left:928px;top:218.08px;width:84.5px;height:7.72px;background:#0c14ee;border-top:1px solid #2a2a48;color:#0a0a50;">23 Bridge</div>
<div class="a sr" style="left:928px;top:225.80px;width:84.5px;height:7.72px;background:#0c14ee;border-top:1px solid #2a2a48;color:#0a0a50;">24 Couch Support</div>
<div class="a sr" style="left:928px;top:233.52px;width:84.5px;height:7.72px;background:#0c14ee;border-top:1px solid #2a2a48;color:#0a0a50;">25 Mattress</div>
<div class="a sr" style="left:928px;top:241.24px;width:84.5px;height:7.72px;background:#0c14ee;border-top:1px solid #2a2a48;color:#0a0a50;">26 Couch Support</div>
<div class="a sr" style="left:928px;top:248.96px;width:84.5px;height:7.72px;background:#0c14ee;border-top:1px solid #2a2a48;color:#0a0a50;">27 Couch Support</div>
<div class="a sr" style="left:928px;top:256.68px;width:84.5px;height:7.72px;background:#0c14ee;border-top:1px solid #2a2a48;color:#0a0a50;">28 Mattress</div>
<div class="a" style="left:928px;top:117.7px;width:1px;height:147px;background:#303030;"></div>
<div class="a" style="left:1011.8px;top:117.7px;width:0.8px;height:147px;background:#303030;"></div>
<div class="a" style="left:928px;top:264.2px;width:84.5px;height:1.2px;background:#a8a290;"></div>


<!-- structures panel -->
<div class="a" style="left:124px;top:440px;width:797px;height:12px;background:linear-gradient(#c8cedc,#aab2c6);"></div>
<div class="a t" style="left:125px;top:444px;color:#2a3a90;">Structures</div>
<svg class="a" style="left:904px;top:442px" width="16" height="8"><rect x="3" y="1.5" width="2.5" height="4" fill="#1a2470"/><rect x="2.3" y="5" width="4" height="0.8" fill="#1a2470"/><path d="M9 1.5 l4 4.5 M13 1.5 l-4 4.5" stroke="#1a2470" stroke-width="1.2"/></svg>
<div class="a" style="left:124px;top:452px;width:797px;height:11.5px;background:linear-gradient(#f4f2f8,#c6c2d6);"></div>
<div class="a" style="left:180px;top:453px;width:10px;height:10px;background:linear-gradient(#d8e4f8,#a8c0e8);border:0.5px solid #8090c0;box-sizing:border-box;"></div>
<div class="a t" style="left:126px;top:455px;color:#2a3470;">View:</div>
<div class="a" style="left:143px;top:454px;width:0.5px;height:8px;background:#a0a0b0;"></div>
<div class="a t" style="left:148px;top:455px;color:#2a3470;">Contoured</div>
<div class="a" style="left:177px;top:454px;width:0.5px;height:8px;background:#a0a0b0;"></div>
<div class="a t" style="left:182px;top:455px;color:#2a3470;">All</div>
<div class="a" style="left:192px;top:454px;width:0.5px;height:8px;background:#a0a0b0;"></div>
<div class="a t" style="left:195.5px;top:455px;color:#2a3470;">Layers</div>
<svg class="a" style="left:212px;top:453px" width="10" height="10"><path d="M5 1 L9 8.5 L1 8.5 Z" fill="#f0e020" stroke="#807820" stroke-width="0.6"/><rect x="4.5" y="3" width="1" height="3" fill="#222"/><rect x="4.5" y="7" width="1" height="1" fill="#222"/></svg>
<div class="a" style="left:124px;top:463.5px;width:797px;height:88.5px;background:#ececec;"></div>
<div class="a" style="left:124px;top:463.5px;width:788px;height:8.5px;background:#fdfdfd;"></div>
<div class="a th" style="left:124px;top:464px;width:120px;text-align:left;padding-left:2px;">Name</div>
<div class="a th" style="left:244px;top:464px;width:20px;text-align:center;">Color</div>
<div class="a th" style="left:264px;top:464px;width:22px;text-align:center;">Visible</div>
<div class="a th" style="left:286px;top:464px;width:46px;text-align:right;padding-right:2px;">Volume (cm³)</div>
<div class="a th" style="left:332px;top:464px;width:33px;text-align:left;padding-left:2px;">Type</div>
<div class="a th" style="left:365px;top:464px;width:32px;text-align:center;">Force ED</div>
<div class="a th" style="left:397px;top:464px;width:32px;text-align:center;">Fill ED</div>
<div class="a th" style="left:429px;top:464px;width:42px;text-align:right;padding-right:2px;">Relative ED</div>
<div class="a th" style="left:471px;top:464px;width:47px;text-align:center;">Show 2D Outlines</div>
<div class="a th" style="left:518px;top:464px;width:60px;text-align:center;">2D Transparency</div>
<div class="a th" style="left:578px;top:464px;width:61px;text-align:center;">3D Transparency</div>
<div class="a" style="left:243.5px;top:464px;width:0.5px;height:8px;background:#d4d4d4;"></div>
<div class="a" style="left:263.5px;top:464px;width:0.5px;height:8px;background:#d4d4d4;"></div>
<div class="a" style="left:285.5px;top:464px;width:0.5px;height:8px;background:#d4d4d4;"></div>
<div class="a" style="left:331.5px;top:464px;width:0.5px;height:8px;background:#d4d4d4;"></div>
<div class="a" style="left:364.5px;top:464px;width:0.5px;height:8px;background:#d4d4d4;"></div>
<div class="a" style="left:396.5px;top:464px;width:0.5px;height:8px;background:#d4d4d4;"></div>
<div class="a" style="left:428.5px;top:464px;width:0.5px;height:8px;background:#d4d4d4;"></div>
<div class="a" style="left:470.5px;top:464px;width:0.5px;height:8px;background:#d4d4d4;"></div>
<div class="a" style="left:517.5px;top:464px;width:0.5px;height:8px;background:#d4d4d4;"></div>
<div class="a" style="left:577.5px;top:464px;width:0.5px;height:8px;background:#d4d4d4;"></div>
<div class="a" style="left:638.5px;top:464px;width:0.5px;height:8px;background:#d4d4d4;"></div>
<div class="a" style="left:182px;top:464.5px;font-size:4px;line-height:4px;color:#111;">&#9660;</div>
<div class="a" style="left:124px;top:472.0px;width:515px;height:10px;background:#ececec;border-top:0.8px solid #8c8c8c;box-sizing:border-box;"></div>
<div class="a" style="left:243.5px;top:472.0px;width:1px;height:10px;background:#fafafa;"></div>
<div class="a" style="left:263.5px;top:472.0px;width:1px;height:10px;background:#fafafa;"></div>
<div class="a" style="left:285.5px;top:472.0px;width:1px;height:10px;background:#fafafa;"></div>
<div class="a" style="left:331.5px;top:472.0px;width:1px;height:10px;background:#fafafa;"></div>
<div class="a" style="left:364.5px;top:472.0px;width:1px;height:10px;background:#fafafa;"></div>
<div class="a" style="left:396.5px;top:472.0px;width:1px;height:10px;background:#fafafa;"></div>
<div class="a" style="left:428.5px;top:472.0px;width:1px;height:10px;background:#fafafa;"></div>
<div class="a" style="left:470.5px;top:472.0px;width:1px;height:10px;background:#fafafa;"></div>
<div class="a" style="left:517.5px;top:472.0px;width:1px;height:10px;background:#fafafa;"></div>
<div class="a" style="left:577.5px;top:472.0px;width:1px;height:10px;background:#fafafa;"></div>
<div class="a" style="left:264.5px;top:472.8px;width:21px;height:9.2px;background:#fafafa;"></div>
<div class="a" style="left:471.5px;top:472.8px;width:46px;height:9.2px;background:#fafafa;"></div>
<div class="a" style="left:518.5px;top:472.8px;width:59px;height:9.2px;background:#fafafa;"></div>
<div class="a" style="left:578.5px;top:472.8px;width:60px;height:9.2px;background:#fafafa;"></div>
<div class="a td" style="left:125.5px;top:473.2px;color:#5a5a5a;">Bone</div>
<div class="a" style="left:245.5px;top:473.8px;width:16px;height:7px;background:#d9a27c;"></div>
<div class="a td" style="left:286px;top:473.0px;width:44px;text-align:right;color:#111;">61.262</div>
<div class="a td" style="left:334px;top:474.0px;color:#111;">Internal</div>
<div class="a td" style="left:429px;top:473.0px;width:40px;text-align:right;color:#111;">1.567</div>
<svg class="a" style="left:272px;top:474.0px" width="6" height="6"><rect x="0.5" y="0.5" width="5" height="5" fill="#fff" stroke="#333" stroke-width="0.7"/><path d="M1.5 3 L2.6 4.4 L4.6 1.5" stroke="#111" stroke-width="0.9" fill="none"/></svg>
<svg class="a" style="left:491.5px;top:474.0px" width="6" height="6"><rect x="0.5" y="0.5" width="5" height="5" fill="#fff" stroke="#333" stroke-width="0.7"/><path d="M1.5 3 L2.6 4.4 L4.6 1.5" stroke="#111" stroke-width="0.9" fill="none"/></svg>
<svg class="a" style="left:378.5px;top:474.0px" width="6" height="6"><rect x="0.5" y="0.5" width="5" height="5" fill="#f4f4f4" stroke="#b8b8b8" stroke-width="0.6"/><path d="M1.5 3 L2.6 4.4 L4.6 1.5" stroke="#a8a8a8" stroke-width="0.7" fill="none"/></svg>
<svg class="a" style="left:410px;top:474.0px" width="6" height="6"><rect x="0.5" y="0.5" width="5" height="5" fill="#fbfbfb" stroke="#b0b0b0" stroke-width="0.6"/></svg>
<svg class="a" style="left:518px;top:472.0px" width="121" height="10"><path d="M4 5.5 H57" stroke="#c0c0c0" stroke-width="1.2"/><rect x="52.5" y="2.5" width="3" height="5" rx="1" fill="#f8f8f8" stroke="#888" stroke-width="0.6"/><path d="M64 5.5 H117" stroke="#c0c0c0" stroke-width="1.2"/><rect x="87.5" y="2.5" width="3" height="5" rx="1" fill="#f8f8f8" stroke="#888" stroke-width="0.6"/></svg>
<div class="a" style="left:124px;top:482.0px;width:515px;height:10px;background:#ececec;border-top:0.8px solid #8c8c8c;box-sizing:border-box;"></div>
<div class="a" style="left:243.5px;top:482.0px;width:1px;height:10px;background:#fafafa;"></div>
<div class="a" style="left:263.5px;top:482.0px;width:1px;height:10px;background:#fafafa;"></div>
<div class="a" style="left:285.5px;top:482.0px;width:1px;height:10px;background:#fafafa;"></div>
<div class="a" style="left:331.5px;top:482.0px;width:1px;height:10px;background:#fafafa;"></div>
<div class="a" style="left:364.5px;top:482.0px;width:1px;height:10px;background:#fafafa;"></div>
<div class="a" style="left:396.5px;top:482.0px;width:1px;height:10px;background:#fafafa;"></div>
<div class="a" style="left:428.5px;top:482.0px;width:1px;height:10px;background:#fafafa;"></div>
<div class="a" style="left:470.5px;top:482.0px;width:1px;height:10px;background:#fafafa;"></div>
<div class="a" style="left:517.5px;top:482.0px;width:1px;height:10px;background:#fafafa;"></div>
<div class="a" style="left:577.5px;top:482.0px;width:1px;height:10px;background:#fafafa;"></div>
<div class="a" style="left:264.5px;top:482.8px;width:21px;height:9.2px;background:#fafafa;"></div>
<div class="a" style="left:471.5px;top:482.8px;width:46px;height:9.2px;background:#fafafa;"></div>
<div class="a" style="left:518.5px;top:482.8px;width:59px;height:9.2px;background:#fafafa;"></div>
<div class="a" style="left:578.5px;top:482.8px;width:60px;height:9.2px;background:#fafafa;"></div>
<div class="a td" style="left:125.5px;top:483.2px;color:#5a5a5a;">Brain</div>
<div class="a" style="left:245.5px;top:483.8px;width:16px;height:7px;background:#d9a27c;"></div>
<div class="a td" style="left:286px;top:483.0px;width:44px;text-align:right;color:#111;">90.016</div>
<div class="a td" style="left:334px;top:484.0px;color:#111;">Internal</div>
<div class="a td" style="left:429px;top:483.0px;width:40px;text-align:right;color:#111;">1.038</div>
<svg class="a" style="left:272px;top:484.0px" width="6" height="6"><rect x="0.5" y="0.5" width="5" height="5" fill="#fff" stroke="#333" stroke-width="0.7"/><path d="M1.5 3 L2.6 4.4 L4.6 1.5" stroke="#111" stroke-width="0.9" fill="none"/></svg>
<svg class="a" style="left:491.5px;top:484.0px" width="6" height="6"><rect x="0.5" y="0.5" width="5" height="5" fill="#fff" stroke="#333" stroke-width="0.7"/><path d="M1.5 3 L2.6 4.4 L4.6 1.5" stroke="#111" stroke-width="0.9" fill="none"/></svg>
<svg class="a" style="left:378.5px;top:484.0px" width="6" height="6"><rect x="0.5" y="0.5" width="5" height="5" fill="#f4f4f4" stroke="#b8b8b8" stroke-width="0.6"/><path d="M1.5 3 L2.6 4.4 L4.6 1.5" stroke="#a8a8a8" stroke-width="0.7" fill="none"/></svg>
<svg class="a" style="left:410px;top:484.0px" width="6" height="6"><rect x="0.5" y="0.5" width="5" height="5" fill="#fbfbfb" stroke="#b0b0b0" stroke-width="0.6"/></svg>
<svg class="a" style="left:518px;top:482.0px" width="121" height="10"><path d="M4 5.5 H57" stroke="#c0c0c0" stroke-width="1.2"/><rect x="52.5" y="2.5" width="3" height="5" rx="1" fill="#f8f8f8" stroke="#888" stroke-width="0.6"/><path d="M64 5.5 H117" stroke="#c0c0c0" stroke-width="1.2"/><rect x="87.5" y="2.5" width="3" height="5" rx="1" fill="#f8f8f8" stroke="#888" stroke-width="0.6"/></svg>
<div class="a" style="left:124px;top:492.0px;width:515px;height:10px;background:#ececec;border-top:0.8px solid #8c8c8c;box-sizing:border-box;"></div>
<div class="a" style="left:243.5px;top:492.0px;width:1px;height:10px;background:#fafafa;"></div>
<div class="a" style="left:263.5px;top:492.0px;width:1px;height:10px;background:#fafafa;"></div>
<div class="a" style="left:285.5px;top:492.0px;width:1px;height:10px;background:#fafafa;"></div>
<div class="a" style="left:331.5px;top:492.0px;width:1px;height:10px;background:#fafafa;"></div>
<div class="a" style="left:364.5px;top:492.0px;width:1px;height:10px;background:#fafafa;"></div>
<div class="a" style="left:396.5px;top:492.0px;width:1px;height:10px;background:#fafafa;"></div>
<div class="a" style="left:428.5px;top:492.0px;width:1px;height:10px;background:#fafafa;"></div>
<div class="a" style="left:470.5px;top:492.0px;width:1px;height:10px;background:#fafafa;"></div>
<div class="a" style="left:517.5px;top:492.0px;width:1px;height:10px;background:#fafafa;"></div>
<div class="a" style="left:577.5px;top:492.0px;width:1px;height:10px;background:#fafafa;"></div>
<div class="a" style="left:264.5px;top:492.8px;width:21px;height:9.2px;background:#fafafa;"></div>
<div class="a" style="left:471.5px;top:492.8px;width:46px;height:9.2px;background:#fafafa;"></div>
<div class="a" style="left:518.5px;top:492.8px;width:59px;height:9.2px;background:#fafafa;"></div>
<div class="a" style="left:578.5px;top:492.8px;width:60px;height:9.2px;background:#fafafa;"></div>
<div class="a td" style="left:125.5px;top:493.2px;color:#5a5a5a;">CT3</div>
<div class="a" style="left:245.5px;top:493.8px;width:16px;height:7px;background:#22ee22;"></div>
<div class="a td" style="left:286px;top:493.0px;width:44px;text-align:right;color:#111;">28.523</div>
<div class="a td" style="left:334px;top:494.0px;color:#111;">Internal</div>
<div class="a td" style="left:429px;top:493.0px;width:40px;text-align:right;color:#111;">1.038</div>
<svg class="a" style="left:272px;top:494.0px" width="6" height="6"><rect x="0.5" y="0.5" width="5" height="5" fill="#fff" stroke="#333" stroke-width="0.7"/><path d="M1.5 3 L2.6 4.4 L4.6 1.5" stroke="#111" stroke-width="0.9" fill="none"/></svg>
<svg class="a" style="left:491.5px;top:494.0px" width="6" height="6"><rect x="0.5" y="0.5" width="5" height="5" fill="#fff" stroke="#333" stroke-width="0.7"/><path d="M1.5 3 L2.6 4.4 L4.6 1.5" stroke="#111" stroke-width="0.9" fill="none"/></svg>
<svg class="a" style="left:378.5px;top:494.0px" width="6" height="6"><rect x="0.5" y="0.5" width="5" height="5" fill="#f4f4f4" stroke="#b8b8b8" stroke-width="0.6"/><path d="M1.5 3 L2.6 4.4 L4.6 1.5" stroke="#a8a8a8" stroke-width="0.7" fill="none"/></svg>
<svg class="a" style="left:410px;top:494.0px" width="6" height="6"><rect x="0.5" y="0.5" width="5" height="5" fill="#fbfbfb" stroke="#b0b0b0" stroke-width="0.6"/></svg>
<svg class="a" style="left:518px;top:492.0px" width="121" height="10"><path d="M4 5.5 H57" stroke="#c0c0c0" stroke-width="1.2"/><rect x="52.5" y="2.5" width="3" height="5" rx="1" fill="#f8f8f8" stroke="#888" stroke-width="0.6"/><path d="M64 5.5 H117" stroke="#c0c0c0" stroke-width="1.2"/><rect x="87.5" y="2.5" width="3" height="5" rx="1" fill="#f8f8f8" stroke="#888" stroke-width="0.6"/></svg>
<div class="a" style="left:124px;top:502.0px;width:515px;height:10px;background:#ececec;border-top:0.8px solid #8c8c8c;box-sizing:border-box;"></div>
<div class="a" style="left:243.5px;top:502.0px;width:1px;height:10px;background:#fafafa;"></div>
<div class="a" style="left:263.5px;top:502.0px;width:1px;height:10px;background:#fafafa;"></div>
<div class="a" style="left:285.5px;top:502.0px;width:1px;height:10px;background:#fafafa;"></div>
<div class="a" style="left:331.5px;top:502.0px;width:1px;height:10px;background:#fafafa;"></div>
<div class="a" style="left:364.5px;top:502.0px;width:1px;height:10px;background:#fafafa;"></div>
<div class="a" style="left:396.5px;top:502.0px;width:1px;height:10px;background:#fafafa;"></div>
<div class="a" style="left:428.5px;top:502.0px;width:1px;height:10px;background:#fafafa;"></div>
<div class="a" style="left:470.5px;top:502.0px;width:1px;height:10px;background:#fafafa;"></div>
<div class="a" style="left:517.5px;top:502.0px;width:1px;height:10px;background:#fafafa;"></div>
<div class="a" style="left:577.5px;top:502.0px;width:1px;height:10px;background:#fafafa;"></div>
<div class="a" style="left:264.5px;top:502.8px;width:21px;height:9.2px;background:#fafafa;"></div>
<div class="a" style="left:471.5px;top:502.8px;width:46px;height:9.2px;background:#fafafa;"></div>
<div class="a" style="left:518.5px;top:502.8px;width:59px;height:9.2px;background:#fafafa;"></div>
<div class="a" style="left:578.5px;top:502.8px;width:60px;height:9.2px;background:#fafafa;"></div>
<div class="a td" style="left:125.5px;top:503.2px;color:#5a5a5a;">CT4</div>
<div class="a" style="left:245.5px;top:503.8px;width:16px;height:7px;background:#3a48f0;"></div>
<div class="a td" style="left:286px;top:503.0px;width:44px;text-align:right;color:#111;">13.413</div>
<div class="a td" style="left:334px;top:504.0px;color:#111;">Internal</div>
<div class="a td" style="left:429px;top:503.0px;width:40px;text-align:right;color:#111;">1.038</div>
<svg class="a" style="left:272px;top:504.0px" width="6" height="6"><rect x="0.5" y="0.5" width="5" height="5" fill="#fff" stroke="#333" stroke-width="0.7"/><path d="M1.5 3 L2.6 4.4 L4.6 1.5" stroke="#111" stroke-width="0.9" fill="none"/></svg>
<svg class="a" style="left:491.5px;top:504.0px" width="6" height="6"><rect x="0.5" y="0.5" width="5" height="5" fill="#fff" stroke="#333" stroke-width="0.7"/><path d="M1.5 3 L2.6 4.4 L4.6 1.5" stroke="#111" stroke-width="0.9" fill="none"/></svg>
<svg class="a" style="left:378.5px;top:504.0px" width="6" height="6"><rect x="0.5" y="0.5" width="5" height="5" fill="#f4f4f4" stroke="#b8b8b8" stroke-width="0.6"/><path d="M1.5 3 L2.6 4.4 L4.6 1.5" stroke="#a8a8a8" stroke-width="0.7" fill="none"/></svg>
<svg class="a" style="left:410px;top:504.0px" width="6" height="6"><rect x="0.5" y="0.5" width="5" height="5" fill="#fbfbfb" stroke="#b0b0b0" stroke-width="0.6"/></svg>
<svg class="a" style="left:518px;top:502.0px" width="121" height="10"><path d="M4 5.5 H57" stroke="#c0c0c0" stroke-width="1.2"/><rect x="52.5" y="2.5" width="3" height="5" rx="1" fill="#f8f8f8" stroke="#888" stroke-width="0.6"/><path d="M64 5.5 H117" stroke="#c0c0c0" stroke-width="1.2"/><rect x="87.5" y="2.5" width="3" height="5" rx="1" fill="#f8f8f8" stroke="#888" stroke-width="0.6"/></svg>
<div class="a" style="left:124px;top:512.0px;width:515px;height:10px;background:#ececec;border-top:0.8px solid #8c8c8c;box-sizing:border-box;"></div>
<div class="a" style="left:243.5px;top:512.0px;width:1px;height:10px;background:#fafafa;"></div>
<div class="a" style="left:263.5px;top:512.0px;width:1px;height:10px;background:#fafafa;"></div>
<div class="a" style="left:285.5px;top:512.0px;width:1px;height:10px;background:#fafafa;"></div>
<div class="a" style="left:331.5px;top:512.0px;width:1px;height:10px;background:#fafafa;"></div>
<div class="a" style="left:364.5px;top:512.0px;width:1px;height:10px;background:#fafafa;"></div>
<div class="a" style="left:396.5px;top:512.0px;width:1px;height:10px;background:#fafafa;"></div>
<div class="a" style="left:428.5px;top:512.0px;width:1px;height:10px;background:#fafafa;"></div>
<div class="a" style="left:470.5px;top:512.0px;width:1px;height:10px;background:#fafafa;"></div>
<div class="a" style="left:517.5px;top:512.0px;width:1px;height:10px;background:#fafafa;"></div>
<div class="a" style="left:577.5px;top:512.0px;width:1px;height:10px;background:#fafafa;"></div>
<div class="a" style="left:264.5px;top:512.8px;width:21px;height:9.2px;background:#fafafa;"></div>
<div class="a" style="left:471.5px;top:512.8px;width:46px;height:9.2px;background:#fafafa;"></div>
<div class="a" style="left:518.5px;top:512.8px;width:59px;height:9.2px;background:#fafafa;"></div>
<div class="a" style="left:578.5px;top:512.8px;width:60px;height:9.2px;background:#fafafa;"></div>
<div class="a td" style="left:125.5px;top:513.2px;color:#5a5a5a;">CTInlet</div>
<div class="a" style="left:245.5px;top:513.8px;width:16px;height:7px;background:#f02222;"></div>
<div class="a td" style="left:286px;top:513.0px;width:44px;text-align:right;color:#111;">83.152</div>
<div class="a td" style="left:334px;top:514.0px;color:#111;">Internal</div>
<div class="a td" style="left:429px;top:513.0px;width:40px;text-align:right;color:#111;">1.038</div>
<svg class="a" style="left:272px;top:514.0px" width="6" height="6"><rect x="0.5" y="0.5" width="5" height="5" fill="#fff" stroke="#333" stroke-width="0.7"/><path d="M1.5 3 L2.6 4.4 L4.6 1.5" stroke="#111" stroke-width="0.9" fill="none"/></svg>
<svg class="a" style="left:491.5px;top:514.0px" width="6" height="6"><rect x="0.5" y="0.5" width="5" height="5" fill="#fff" stroke="#333" stroke-width="0.7"/><path d="M1.5 3 L2.6 4.4 L4.6 1.5" stroke="#111" stroke-width="0.9" fill="none"/></svg>
<svg class="a" style="left:378.5px;top:514.0px" width="6" height="6"><rect x="0.5" y="0.5" width="5" height="5" fill="#f4f4f4" stroke="#b8b8b8" stroke-width="0.6"/><path d="M1.5 3 L2.6 4.4 L4.6 1.5" stroke="#a8a8a8" stroke-width="0.7" fill="none"/></svg>
<svg class="a" style="left:410px;top:514.0px" width="6" height="6"><rect x="0.5" y="0.5" width="5" height="5" fill="#fbfbfb" stroke="#b0b0b0" stroke-width="0.6"/></svg>
<svg class="a" style="left:518px;top:512.0px" width="121" height="10"><path d="M4 5.5 H57" stroke="#c0c0c0" stroke-width="1.2"/><rect x="52.5" y="2.5" width="3" height="5" rx="1" fill="#f8f8f8" stroke="#888" stroke-width="0.6"/><path d="M64 5.5 H117" stroke="#c0c0c0" stroke-width="1.2"/><rect x="87.5" y="2.5" width="3" height="5" rx="1" fill="#f8f8f8" stroke="#888" stroke-width="0.6"/></svg>
<div class="a" style="left:124px;top:522.0px;width:515px;height:10px;background:#ececec;border-top:0.8px solid #8c8c8c;box-sizing:border-box;"></div>
<div class="a" style="left:243.5px;top:522.0px;width:1px;height:10px;background:#fafafa;"></div>
<div class="a" style="left:263.5px;top:522.0px;width:1px;height:10px;background:#fafafa;"></div>
<div class="a" style="left:285.5px;top:522.0px;width:1px;height:10px;background:#fafafa;"></div>
<div class="a" style="left:331.5px;top:522.0px;width:1px;height:10px;background:#fafafa;"></div>
<div class="a" style="left:364.5px;top:522.0px;width:1px;height:10px;background:#fafafa;"></div>
<div class="a" style="left:396.5px;top:522.0px;width:1px;height:10px;background:#fafafa;"></div>
<div class="a" style="left:428.5px;top:522.0px;width:1px;height:10px;background:#fafafa;"></div>
<div class="a" style="left:470.5px;top:522.0px;width:1px;height:10px;background:#fafafa;"></div>
<div class="a" style="left:517.5px;top:522.0px;width:1px;height:10px;background:#fafafa;"></div>
<div class="a" style="left:577.5px;top:522.0px;width:1px;height:10px;background:#fafafa;"></div>
<div class="a" style="left:264.5px;top:522.8px;width:21px;height:9.2px;background:#fafafa;"></div>
<div class="a" style="left:471.5px;top:522.8px;width:46px;height:9.2px;background:#fafafa;"></div>
<div class="a" style="left:518.5px;top:522.8px;width:59px;height:9.2px;background:#fafafa;"></div>
<div class="a" style="left:578.5px;top:522.8px;width:60px;height:9.2px;background:#fafafa;"></div>
<div class="a td" style="left:125.5px;top:523.2px;color:#5a5a5a;">Lung</div>
<div class="a" style="left:245.5px;top:523.8px;width:16px;height:7px;background:#d9a27c;"></div>
<div class="a td" style="left:286px;top:523.0px;width:44px;text-align:right;color:#111;">182.939</div>
<div class="a td" style="left:334px;top:524.0px;color:#111;">Internal</div>
<div class="a td" style="left:429px;top:523.0px;width:40px;text-align:right;color:#111;">0.235</div>
<svg class="a" style="left:272px;top:524.0px" width="6" height="6"><rect x="0.5" y="0.5" width="5" height="5" fill="#fff" stroke="#333" stroke-width="0.7"/><path d="M1.5 3 L2.6 4.4 L4.6 1.5" stroke="#111" stroke-width="0.9" fill="none"/></svg>
<svg class="a" style="left:491.5px;top:524.0px" width="6" height="6"><rect x="0.5" y="0.5" width="5" height="5" fill="#fff" stroke="#333" stroke-width="0.7"/><path d="M1.5 3 L2.6 4.4 L4.6 1.5" stroke="#111" stroke-width="0.9" fill="none"/></svg>
<svg class="a" style="left:378.5px;top:524.0px" width="6" height="6"><rect x="0.5" y="0.5" width="5" height="5" fill="#f4f4f4" stroke="#b8b8b8" stroke-width="0.6"/><path d="M1.5 3 L2.6 4.4 L4.6 1.5" stroke="#a8a8a8" stroke-width="0.7" fill="none"/></svg>
<svg class="a" style="left:410px;top:524.0px" width="6" height="6"><rect x="0.5" y="0.5" width="5" height="5" fill="#fbfbfb" stroke="#b0b0b0" stroke-width="0.6"/></svg>
<svg class="a" style="left:518px;top:522.0px" width="121" height="10"><path d="M4 5.5 H57" stroke="#c0c0c0" stroke-width="1.2"/><rect x="52.5" y="2.5" width="3" height="5" rx="1" fill="#f8f8f8" stroke="#888" stroke-width="0.6"/><path d="M64 5.5 H117" stroke="#c0c0c0" stroke-width="1.2"/><rect x="87.5" y="2.5" width="3" height="5" rx="1" fill="#f8f8f8" stroke="#888" stroke-width="0.6"/></svg>
<div class="a" style="left:124px;top:532.0px;width:515px;height:10px;background:#ececec;border-top:0.8px solid #8c8c8c;box-sizing:border-box;"></div>
<div class="a" style="left:243.5px;top:532.0px;width:1px;height:10px;background:#fafafa;"></div>
<div class="a" style="left:263.5px;top:532.0px;width:1px;height:10px;background:#fafafa;"></div>
<div class="a" style="left:285.5px;top:532.0px;width:1px;height:10px;background:#fafafa;"></div>
<div class="a" style="left:331.5px;top:532.0px;width:1px;height:10px;background:#fafafa;"></div>
<div class="a" style="left:364.5px;top:532.0px;width:1px;height:10px;background:#fafafa;"></div>
<div class="a" style="left:396.5px;top:532.0px;width:1px;height:10px;background:#fafafa;"></div>
<div class="a" style="left:428.5px;top:532.0px;width:1px;height:10px;background:#fafafa;"></div>
<div class="a" style="left:470.5px;top:532.0px;width:1px;height:10px;background:#fafafa;"></div>
<div class="a" style="left:517.5px;top:532.0px;width:1px;height:10px;background:#fafafa;"></div>
<div class="a" style="left:577.5px;top:532.0px;width:1px;height:10px;background:#fafafa;"></div>
<div class="a" style="left:264.5px;top:532.8px;width:21px;height:9.2px;background:#fafafa;"></div>
<div class="a" style="left:471.5px;top:532.8px;width:46px;height:9.2px;background:#fafafa;"></div>
<div class="a" style="left:518.5px;top:532.8px;width:59px;height:9.2px;background:#fafafa;"></div>
<div class="a" style="left:578.5px;top:532.8px;width:60px;height:9.2px;background:#fafafa;"></div>
<div class="a td" style="left:125.5px;top:533.2px;color:#5a5a5a;">MM</div>
<div class="a" style="left:245.5px;top:533.8px;width:16px;height:7px;background:#f4f422;"></div>
<div class="a td" style="left:286px;top:533.0px;width:44px;text-align:right;color:#111;">6.469</div>
<div class="a td" style="left:334px;top:534.0px;color:#111;">Internal</div>
<div class="a td" style="left:429px;top:533.0px;width:40px;text-align:right;color:#111;"></div>
<svg class="a" style="left:272px;top:534.0px" width="6" height="6"><rect x="0.5" y="0.5" width="5" height="5" fill="#fff" stroke="#333" stroke-width="0.7"/><path d="M1.5 3 L2.6 4.4 L4.6 1.5" stroke="#111" stroke-width="0.9" fill="none"/></svg>
<svg class="a" style="left:491.5px;top:534.0px" width="6" height="6"><rect x="0.5" y="0.5" width="5" height="5" fill="#fff" stroke="#333" stroke-width="0.7"/><path d="M1.5 3 L2.6 4.4 L4.6 1.5" stroke="#111" stroke-width="0.9" fill="none"/></svg>
<svg class="a" style="left:378.5px;top:534.0px" width="6" height="6"><rect x="0.5" y="0.5" width="5" height="5" fill="#f4f4f4" stroke="#b8b8b8" stroke-width="0.6"/></svg>
<svg class="a" style="left:410px;top:534.0px" width="6" height="6"><rect x="0.5" y="0.5" width="5" height="5" fill="#fbfbfb" stroke="#b0b0b0" stroke-width="0.6"/></svg>
<svg class="a" style="left:518px;top:532.0px" width="121" height="10"><path d="M4 5.5 H57" stroke="#c0c0c0" stroke-width="1.2"/><rect x="52.5" y="2.5" width="3" height="5" rx="1" fill="#f8f8f8" stroke="#888" stroke-width="0.6"/><path d="M64 5.5 H117" stroke="#c0c0c0" stroke-width="1.2"/><rect x="87.5" y="2.5" width="3" height="5" rx="1" fill="#f8f8f8" stroke="#888" stroke-width="0.6"/></svg>
<div class="a" style="left:124px;top:542.0px;width:515px;height:10px;background:#d6dae4;border-top:0.8px solid #8c8c8c;box-sizing:border-box;"></div>
<div class="a" style="left:243.5px;top:542.0px;width:1px;height:10px;background:#fafafa;"></div>
<div class="a" style="left:263.5px;top:542.0px;width:1px;height:10px;background:#fafafa;"></div>
<div class="a" style="left:285.5px;top:542.0px;width:1px;height:10px;background:#fafafa;"></div>
<div class="a" style="left:331.5px;top:542.0px;width:1px;height:10px;background:#fafafa;"></div>
<div class="a" style="left:364.5px;top:542.0px;width:1px;height:10px;background:#fafafa;"></div>
<div class="a" style="left:396.5px;top:542.0px;width:1px;height:10px;background:#fafafa;"></div>
<div class="a" style="left:428.5px;top:542.0px;width:1px;height:10px;background:#fafafa;"></div>
<div class="a" style="left:470.5px;top:542.0px;width:1px;height:10px;background:#fafafa;"></div>
<div class="a" style="left:517.5px;top:542.0px;width:1px;height:10px;background:#fafafa;"></div>
<div class="a" style="left:577.5px;top:542.0px;width:1px;height:10px;background:#fafafa;"></div>
<div class="a" style="left:264.5px;top:542.8px;width:21px;height:9.2px;background:#e4e6ec;"></div>
<div class="a" style="left:471.5px;top:542.8px;width:46px;height:9.2px;background:#d6dae4;"></div>
<div class="a" style="left:518.5px;top:542.8px;width:59px;height:9.2px;background:#e4e6ec;"></div>
<div class="a" style="left:578.5px;top:542.8px;width:60px;height:9.2px;background:#e4e6ec;"></div>
<div class="a td" style="left:125.5px;top:543.2px;color:#5a5a5a;">patient</div>
<div class="a" style="left:245.5px;top:543.8px;width:16px;height:7px;background:#d9a27c;"></div>
<div class="a td" style="left:286px;top:543.0px;width:44px;text-align:right;color:#111;">8956.238</div>
<div class="a td" style="left:334px;top:544.0px;color:#111;">External</div>
<div class="a td" style="left:429px;top:543.0px;width:40px;text-align:right;color:#111;">1.012</div>
<svg class="a" style="left:272px;top:544.0px" width="6" height="6"><rect x="0.5" y="0.5" width="5" height="5" fill="#fff" stroke="#333" stroke-width="0.7"/><path d="M1.5 3 L2.6 4.4 L4.6 1.5" stroke="#111" stroke-width="0.9" fill="none"/></svg>
<svg class="a" style="left:491.5px;top:544.0px" width="6" height="6"><rect x="0.5" y="0.5" width="5" height="5" fill="#fff" stroke="#333" stroke-width="0.7"/><path d="M1.5 3 L2.6 4.4 L4.6 1.5" stroke="#111" stroke-width="0.9" fill="none"/></svg>
<svg class="a" style="left:378.5px;top:544.0px" width="6" height="6"><rect x="0.5" y="0.5" width="5" height="5" fill="#f4f4f4" stroke="#b8b8b8" stroke-width="0.6"/><path d="M1.5 3 L2.6 4.4 L4.6 1.5" stroke="#a8a8a8" stroke-width="0.7" fill="none"/></svg>
<svg class="a" style="left:410px;top:544.0px" width="6" height="6"><rect x="0.5" y="0.5" width="5" height="5" fill="#fbfbfb" stroke="#b0b0b0" stroke-width="0.6"/></svg>
<svg class="a" style="left:518px;top:542.0px" width="121" height="10"><path d="M4 5.5 H57" stroke="#c0c0c0" stroke-width="1.2"/><rect x="52.5" y="2.5" width="3" height="5" rx="1" fill="#f8f8f8" stroke="#888" stroke-width="0.6"/><path d="M64 5.5 H117" stroke="#c0c0c0" stroke-width="1.2"/><rect x="112.5" y="2.5" width="3" height="5" rx="1" fill="#f8f8f8" stroke="#888" stroke-width="0.6"/></svg>
<div class="a" style="left:638.5px;top:472px;width:0.8px;height:80px;background:#7a7a7a;"></div>
<div class="a" style="left:517.5px;top:472px;width:0.8px;height:80px;background:#9a9a9a;"></div>
<div class="a" style="left:577.5px;top:472px;width:0.8px;height:80px;background:#9a9a9a;"></div>
<div class="a" style="left:912.5px;top:464px;width:7.5px;height:88px;background:#f6f6f6;"></div>
<div class="a" style="left:913px;top:473px;width:6.5px;height:24px;background:#d8d8d8;border:0.5px solid #b0b0b0;box-sizing:border-box;"></div>
<svg class="a" style="left:912.5px;top:464px" width="8" height="88"><path d="M2 5.5 L4 3.5 L6 5.5" stroke="#444" stroke-width="0.7" fill="none"/><path d="M2.5 20 H5.5 M2.5 21.5 H5.5 M2.5 23 H5.5" stroke="#555" stroke-width="0.5"/><path d="M2 83 L4 85 L6 83" stroke="#444" stroke-width="0.7" fill="none"/></svg>
<div class="a" style="left:920px;top:440px;width:1px;height:112px;background:#b8c0d4;"></div>
<div class="a" style="left:124px;top:552px;width:890px;height:8.8px;background:linear-gradient(#e2e7f2,#d6ddee);border-top:0.5px solid #a8b0c8;box-sizing:border-box;"></div>
<div class="a" style="left:124px;top:552.5px;width:26px;height:8px;background:linear-gradient(#d4dcf0,#b8c4e4);"></div>
<div class="a st" style="left:126px;top:553px;color:#2a3a90;">Slice Mode</div>
<div class="a st" style="left:159px;top:553px;color:#2a3a90;">S <u>(p)</u></div>
<div class="a" style="left:169px;top:553px;width:27px;height:7.5px;background:#f4f6fa;"></div>
<div class="a st" style="left:171px;top:553px;color:#111;">2.88</div>
<div class="a st" style="left:199px;top:553px;color:#2a3a90;">T <u>(p)</u></div>
<div class="a" style="left:209px;top:553px;width:27px;height:7.5px;background:#f4f6fa;"></div>
<div class="a st" style="left:211px;top:553px;color:#111;">-52.10</div>
<div class="a st" style="left:239px;top:553px;color:#2a3a90;">C <u>(p)</u></div>
<div class="a" style="left:249px;top:553px;width:26px;height:7.5px;background:#f4f6fa;"></div>
<div class="a st" style="left:251px;top:553px;color:#111;">19.68</div>
<div class="a st" style="left:282px;top:553px;color:#2a3a90;">cm</div>
<div class="a st" style="left:296px;top:553px;color:#2a3a90;">Active Slice T</div>
<div class="a" style="left:330px;top:553px;width:26px;height:7.5px;background:#f4f6fa;"></div>
<div class="a st" style="left:332px;top:553px;color:#111;">89</div>
<div class="a st" style="left:363px;top:553px;color:#2a3a90;">/ 261</div>
<svg class="a" style="left:191px;top:553px" width="4" height="8"><path d="M0.5 3 L2 1 L3.5 3 Z M0.5 5 L2 7 L3.5 5 Z" fill="#1a2470"/></svg>
<svg class="a" style="left:231.5px;top:553px" width="4" height="8"><path d="M0.5 3 L2 1 L3.5 3 Z M0.5 5 L2 7 L3.5 5 Z" fill="#1a2470"/></svg>
<svg class="a" style="left:272px;top:553px" width="4" height="8"><path d="M0.5 3 L2 1 L3.5 3 Z M0.5 5 L2 7 L3.5 5 Z" fill="#1a2470"/></svg>
<svg class="a" style="left:353px;top:553px" width="4" height="8"><path d="M0.5 3 L2 1 L3.5 3 Z M0.5 5 L2 7 L3.5 5 Z" fill="#1a2470"/></svg>
<div class="a st" style="left:609px;top:553px;color:#111;">Isocenter Shift(cm) X: -0.05 &nbsp;&nbsp;&nbsp; Y: 1.22 &nbsp;&nbsp;&nbsp; Z: -0.05</div>
<div class="a st" style="left:737px;top:553px;color:#111;">Adaptation Method: Optimize Weights and Shapes</div>
<div class="a" style="left:735.5px;top:553px;width:0.5px;height:8px;background:#9098b0;"></div>
<div class="a" style="left:883.5px;top:553px;width:0.5px;height:8px;background:#9098b0;"></div>
<div class="a" style="left:604px;top:553px;width:0.5px;height:8px;background:#9098b0;"></div>
<svg class="a" style="left:952px;top:552px" width="62" height="9"><rect x="3" y="2.5" width="5" height="4" rx="1" fill="none" stroke="#2a3a90" stroke-width="0.7"/><path d="M12 4.5 H54" stroke="#707a98" stroke-width="0.6"/><rect x="29" y="2" width="3" height="5" rx="1" fill="#f0f0f0" stroke="#2a3a90" stroke-width="0.6"/><circle cx="59" cy="4.5" r="2.2" fill="none" stroke="#2a3a90" stroke-width="0.7"/></svg>

<!-- glare -->
<svg class="a" style="left:0;top:0;pointer-events:none" width="1140" height="642">
<defs>
<linearGradient id="bg1" x1="94" y1="0" x2="606" y2="0" gradientUnits="userSpaceOnUse"><stop offset="0" stop-color="#fff" stop-opacity="0.0"/><stop offset="0.5" stop-color="#fff" stop-opacity="0.06"/><stop offset="1" stop-color="#fff" stop-opacity="0.27"/></linearGradient>
<clipPath id="bzc"><rect x="94" y="24" width="952" height="582" rx="23"/></clipPath>
</defs>
<polygon clip-path="url(#bzc)" points="94,24 605.4,24 587.4,54 94,54" fill="url(#bg1)"/>
<path clip-path="url(#bzc)" d="M110 24.8 H605" stroke="url(#bg1)" stroke-width="1.5"/>
<path d="M605.4 24 L587.4 54" stroke="#fff" stroke-opacity="0.12" stroke-width="1"/>
<polygon points="124,55 587.4,55 283,561 124,561" fill="#fff" fill-opacity="0.05"/>
</svg>
</body></html>
